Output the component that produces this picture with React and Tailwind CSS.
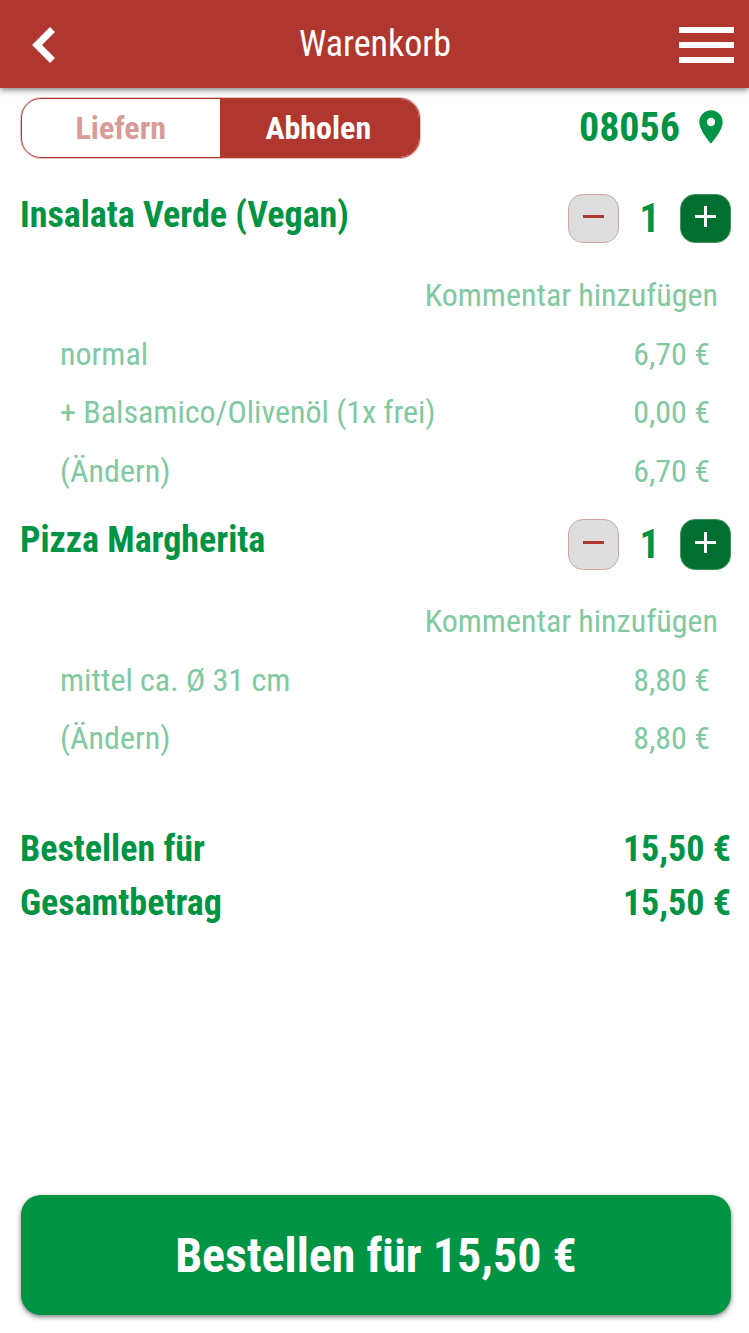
import React, { useState } from "react";

const initialItems = [
  {
    id: 1,
    name: "Insalata Verde (Vegan)",
    count: 1,
    rows: [
      { label: "normal", price: "6,70 €" },
      { label: "+ Balsamico/Olivenöl (1x frei)", price: "0,00 €" },
      { label: "(Ändern)", price: "6,70 €" },
    ],
  },
  {
    id: 2,
    name: "Pizza Margherita",
    count: 1,
    rows: [
      { label: "mittel ca. Ø 31 cm", price: "8,80 €" },
      { label: "(Ändern)", price: "8,80 €" },
    ],
  },
];

function Header() {
  return (
    <header className="h-[88px] shrink-0 bg-[#b03730] text-white flex items-center justify-between pl-[31px] pr-[15px] shadow-[0_2px_6px_rgba(0,0,0,0.5)]">
      <button className="w-[55px] pt-[2px]">
        <svg width="24" height="38" viewBox="0 0 24 38" fill="none">
          <path d="M21.5 3.5 L6 19 L21.5 34.5" stroke="currentColor" strokeWidth="7" />
        </svg>
      </button>
      <h1 className="text-[36px] leading-[88px] mr-[15px]">Warenkorb</h1>
      <button className="w-[55px] flex flex-col gap-[9px] pt-[2px]">
        <span className="h-[6px] bg-white" />
        <span className="h-[6px] bg-white" />
        <span className="h-[6px] bg-white" />
      </button>
    </header>
  );
}

function Stepper({ count, onChange, className }) {
  return (
    <div className={`flex items-center ${className}`}>
      <button
        onClick={() => onChange(Math.max(0, count - 1))}
        className="w-[51px] h-full rounded-[15px] border border-[#d3a5a2] bg-[#dedede] flex items-center justify-center"
      >
        <span className="w-[21px] h-[3px] bg-[#b03730] mb-[4px]" />
      </button>
      <span className="w-[61px] text-center text-[40px] leading-[48px] font-bold">{count}</span>
      <button
        onClick={() => onChange(count + 1)}
        className="w-[51px] h-full rounded-[15px] border border-[#42955e] bg-[#006f30] text-white flex items-center justify-center"
      >
        <svg width="21" height="21" viewBox="0 0 21 21" className="mb-[4px]">
          <path d="M0 10.5H21M10.5 0V21" stroke="currentColor" strokeWidth="3" />
        </svg>
      </button>
    </div>
  );
}

export default function App() {
  const [items, setItems] = useState(initialItems);

  const setCount = (id, count) => {
    setItems(items.map((item) => (item.id === id ? { ...item, count } : item)));
  };

  return (
    <div className="h-[1333px] w-[749px] flex flex-col bg-white text-[#009444] font-['Roboto_Condensed','Roboto',sans-serif] font-stretch-condensed overflow-hidden">
      <Header />

      {/* Delivery / pickup */}
      <div className="flex justify-between pl-[21px] pr-[18px] pt-[9px] h-[98px]">
        <div className="w-[399px] h-[60px] mt-[1px] flex rounded-[20px] border border-[#b03730] shadow-[0_0_0_1px_rgba(176,55,48,0.3)] overflow-hidden text-[32px] font-bold leading-[58px]">
          <button className="flex-1 text-[#d99b98]">Liefern</button>
          <button className="flex-1 pr-[2px] bg-[#b03730] text-white">Abholen</button>
        </div>
        <div className="flex items-center h-[60px] text-[40px] font-bold">
          <span className="pt-[2px]">08056</span>
          <svg className="ml-[11px]" width="40" height="40" viewBox="0 0 24 24" fill="currentColor">
            <path d="M12 2C8.13 2 5 5.13 5 9c0 5.25 7 13 7 13s7-7.75 7-13c0-3.87-3.13-7-7-7zm0 9.5a2.5 2.5 0 0 1 0-5 2.5 2.5 0 0 1 0 5z" />
          </svg>
        </div>
      </div>

      {/* Cart items */}
      {items.map((item, i) => (
        <section key={item.id} className={i === 0 ? "h-[325px]" : "h-[311px]"}>
          <div
            className={`flex justify-between items-start pl-[20px] pr-[18px] pt-[8px] ${
              i === 0 ? "h-[80px]" : "h-[81px]"
            }`}
          >
            <h2 className="text-[36px] leading-[42px] font-bold">{item.name}</h2>
            <Stepper
              count={item.count}
              onChange={(count) => setCount(item.id, count)}
              className={i === 0 ? "h-[49px]" : "h-[51px]"}
            />
          </div>
          <div className="text-[32px] text-[#80c9a1] leading-[58.7px]">
            <p className="text-right pr-[31px]">Kommentar hinzufügen</p>
            {item.rows.map((row) => (
              <div key={row.label} className="flex justify-between pl-[60px] pr-[39px]">
                <span>{row.label}</span>
                <span>{row.price}</span>
              </div>
            ))}
          </div>
        </section>
      ))}

      {/* Totals */}
      <div className="pl-[20px] pr-[18px] text-[36px] leading-[54px] font-bold">
        <div className="flex justify-between">
          <span>Bestellen für</span>
          <span>15,50 €</span>
        </div>
        <div className="flex justify-between">
          <span>Gesamtbetrag</span>
          <span>15,50 €</span>
        </div>
      </div>

      <button className="mt-auto mb-[18px] ml-[21px] w-[710px] h-[120px] pt-[2px] shrink-0 rounded-[20px] bg-[#009444] text-white text-[48px] font-bold shadow-[0_2px_5px_rgba(0,0,0,0.5)]">
        Bestellen für 15,50 €
      </button>
    </div>
  );
}
